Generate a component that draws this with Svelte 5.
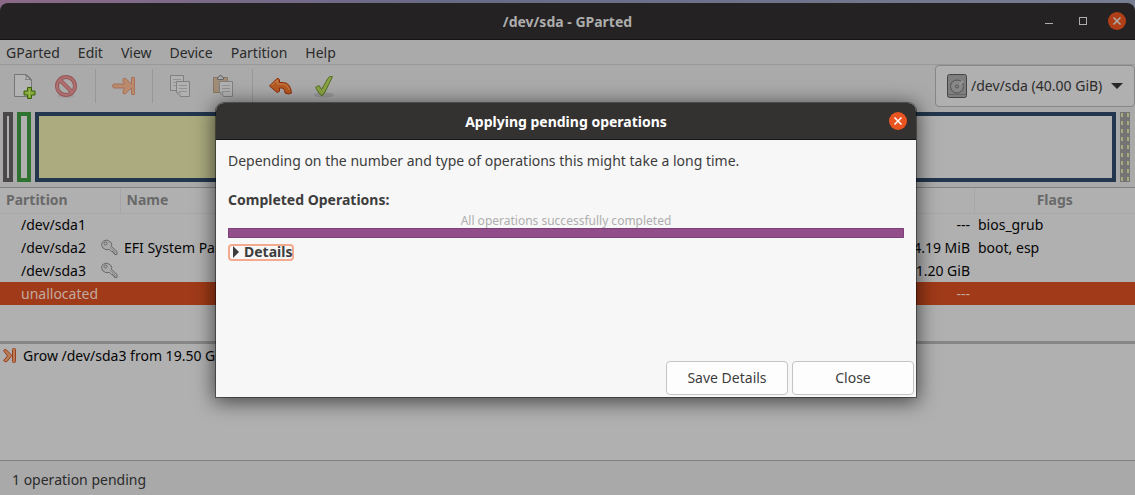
<script lang="ts">
interface PartitionRow {
	name: string
	locked?: boolean
	label?: string
	unused?: string
	flags?: string
	selected?: boolean
}

const menus = ['GParted', 'Edit', 'View', 'Device', 'Partition', 'Help']

const partitions: PartitionRow[] = [
	{ name: '/dev/sda1', unused: '---', flags: 'bios_grub' },
	{
		name: '/dev/sda2',
		locked: true,
		label: 'EFI System Partition',
		unused: '504.19 MiB',
		flags: 'boot, esp',
	},
	{ name: '/dev/sda3', locked: true, unused: '11.20 GiB' },
	{ name: 'unallocated', unused: '---', selected: true },
]

let device = $state('/dev/sda')
</script>

{#snippet cross()}
	<svg width="18" height="18" viewBox="0 0 18 18" aria-hidden="true">
		<path d="M5.5 5.5l7 7m0-7l-7 7" stroke="currentColor" stroke-width="1.5" />
	</svg>
{/snippet}

<div class="window">
	<header class="titlebar">
		<h1>/dev/sda - GParted</h1>
		<div class="controls">
			<button aria-label="Minimize">
				<svg width="18" height="18" aria-hidden="true"><path d="M5 11.5h8" stroke="currentColor" /></svg>
			</button>
			<button aria-label="Maximize">
				<svg width="18" height="18" aria-hidden="true">
					<rect x="5.5" y="5.5" width="7" height="7" fill="none" stroke="currentColor" />
				</svg>
			</button>
			<button class="close" aria-label="Close window">{@render cross()}</button>
		</div>
	</header>

	<nav>
		{#each menus as menu (menu)}
			<button>{menu}</button>
		{/each}
	</nav>

	<div class="toolbar">
		<button aria-label="New">
			<svg width="24" height="24" viewBox="0 0 24 24" aria-hidden="true">
				<path d="M2.5 .5h12l5 5v17h-17z" fill="#b3b3b3" stroke="#757575" />
				<path d="M13.500 .5q2 3 0 5 4-1 6 1z" fill="#c0c0c0" stroke="#777" />
				<path
					d="M15.500 13.500h4v3.500h3.500v4h-3.500v3.500h-4v-3.500h-3.500v-4h3.500z"
					fill="#7da130"
					stroke="#39620a"
				/>
				<path d="M17.500 15v8m-4-4h8" stroke="#9bb852" />
			</svg>
		</button>
		<button aria-label="Delete">
			<svg width="24" height="24" viewBox="0 0 24 24" aria-hidden="true">
				<ellipse cx="11" cy="22" rx="9" ry="2" fill="#a0a0a0" />
				<circle cx="11" cy="12" r="9" fill="none" stroke="#985557" stroke-width="4" />
				<path d="M5 6l12 12" stroke="#a05c5d" stroke-width="4" />
				<circle cx="11" cy="12" r="9" fill="none" stroke="#ad7271" stroke-width="2" />
				<path d="M5 6l12 12" stroke="#ad7271" stroke-width="2" />
			</svg>
		</button>
		<hr />
		<button aria-label="Resize/Move">
			<svg width="24" height="24" viewBox="0 0 24 24" aria-hidden="true">
				<path
					d="M1.500 10h11l-1.500-2.500q-1-3 2-3.500l6.500 6V3.500h3v17h-3V14L13 20q-3 0-2-3l1.500-3h-11q-2-2 0-4z"
					fill="#b98a6b"
					stroke="#a9705a"
				/>
			</svg>
		</button>
		<hr />
		<button aria-label="Copy">
			<svg width="24" height="24" viewBox="0 0 24 24" aria-hidden="true">
				<path d="M1.500 1.500h13v15h-13z" fill="#b1b1b1" stroke="#808080" />
				<path d="M4 5.500h8m-8 3h8m-8 3h8" stroke="#929292" />
				<path d="M7.500 7.500h13v15h-9l-4-4z" fill="#b1b1b1" stroke="#808080" />
				<path d="M10 11.500h8m-8 3h8m-8 3h8M8 18.500h3v4" stroke="#929292" fill="none" />
			</svg>
		</button>
		<button aria-label="Paste">
			<svg width="24" height="24" viewBox="0 0 24 24" aria-hidden="true">
				<path d="M1.500 3.500h14v15h-14z" fill="#a08d78" stroke="#887760" />
				<path d="M5.500 5.500v-2q2 0 2-2h2q0 2 2 2v2z" fill="#aaa" stroke="#666" />
				<path d="M7.500 7.500h13v15h-9l-4-4z" fill="#b1b1b1" stroke="#808080" />
				<path d="M10 11.500h8m-8 3h8m-8 3h8M8 18.500h3v4" stroke="#929292" fill="none" />
			</svg>
		</button>
		<hr />
		<button aria-label="Undo">
			<svg width="24" height="24" viewBox="0 0 24 24" aria-hidden="true">
				<path
					d="M.5 12L8 4.500q2-.5 2.500 1.500v2.500h4q7 .5 8 10.500-3 2-6.500 0 0-5-4-5h-1.500v3q-1 2-3 1z"
					fill="#b65a22"
					stroke="#8c2d0b"
				/>
				<path d="M2.500 11.500l6-5.500v4h6q4 .5 6 6" fill="none" stroke="#c4824f" />
			</svg>
		</button>
		<button aria-label="Apply">
			<svg width="24" height="24" viewBox="0 0 24 24" aria-hidden="true">
				<ellipse cx="12" cy="21" rx="10" ry="2.500" fill="#979797" />
				<path
					d="M3.500 13.500l3.500-2 2.500 4L16.500 3.500q2-1.500 4-1L13 18l-3 4q-3-2-6.500-8.500z"
					fill="#8ba344"
					stroke="#507020"
				/>
			</svg>
		</button>

		<label class="device">
			<svg width="20" height="24" viewBox="0 0 20 24" aria-hidden="true">
				<rect x=".5" y=".5" width="19" height="23" rx="2" fill="#7e7e7e" stroke="#444" />
				<path d="M1 20.500h18" stroke="#666" />
				<circle cx="10" cy="12.500" r="6.500" fill="#888" stroke="#555" />
				<circle cx="10" cy="12.500" r="1.500" fill="none" stroke="#555" />
				<path d="M13 10l3-3" stroke="#999" stroke-width="2" />
			</svg>
			<select bind:value={device} aria-label="Device">
				<option value="/dev/sda">/dev/sda (40.00 GiB)</option>
			</select>
			<svg class="arrow" width="12" height="6" aria-hidden="true"><path d="M0 0h12l-6 6z" fill="#282828" /></svg>
		</label>
	</div>

	<div class="disk">
		<div class="part grub"></div>
		<div class="part efi"></div>
		<div class="part root"></div>
		<div class="part free"></div>
	</div>

	<div class="partitions">
		<table>
			<colgroup>
				<col class="c-part" />
				<col />
				<col class="c-unused" />
				<col class="c-flags" />
			</colgroup>
			<thead>
				<tr>
					<th>Partition</th>
					<th>Name</th>
					<th></th>
					<th class="center">Flags</th>
				</tr>
			</thead>
			<tbody>
				{#each partitions as row (row.name)}
					<tr class:selected={row.selected}>
						<td>
							<div class="name">
								{row.name}
								{#if row.locked}
									<svg width="17" height="17" viewBox="0 0 17 17" aria-hidden="true">
										<path
											d="M8.500 10.500q-4 1-6.500-1.500-3-4 .5-7Q6-.5 9.500 3q2 2 1 4.500l5.500 5v3h-2.500v-1.500h-1.500v-1.500h-1.500z"
											fill="#aaa"
											stroke="#686868"
										/>
										<circle cx="4.500" cy="4.500" r="1.500" fill="#b0b0b0" stroke="#686868" />
										<path d="M9 8l5.500 5.500" stroke="#888" />
									</svg>
								{/if}
							</div>
						</td>
						<td>{row.label ?? ''}</td>
						<td class="right">{row.unused ?? ''}</td>
						<td>{row.flags ?? ''}</td>
					</tr>
				{/each}
			</tbody>
		</table>
	</div>

	<div class="operations">
		<svg width="14" height="18" viewBox="0 -2 14 18" aria-hidden="true">
			<path
				d="M.5 2.500Q2 .5 3.500 2L9 7.500 4 13.500q-2 1-3.500-1l4-4.500z"
				fill="#b77c56"
				stroke="#984020"
			/>
			<rect x="9.500" y=".5" width="3" height="14" rx="1" fill="#b77c56" stroke="#984020" />
		</svg>
		<span>Grow /dev/sda3 from 19.50 GiB</span>
	</div>

	<footer>1 operation pending</footer>
</div>

<div class="overlay">
	<div class="dialog" role="dialog" aria-labelledby="dialog-title">
		<header class="titlebar">
			<h2 id="dialog-title">Applying pending operations</h2>
			<div class="controls">
				<button class="close" aria-label="Close dialog">{@render cross()}</button>
			</div>
		</header>
		<div class="content">
			<p>Depending on the number and type of operations this might take a long time.</p>
			<h3>Completed Operations:</h3>
			<label class="status" for="progress">All operations successfully completed</label>
			<progress id="progress" value="1" max="1"></progress>
			<details>
				<summary>
					<svg width="6" height="12" aria-hidden="true"><path d="M0 0v12l6-6z" fill="#3d3d3d" /></svg>
					Details
				</summary>
			</details>
		</div>
		<div class="actions">
			<button>Save Details</button>
			<button>Close</button>
		</div>
	</div>
</div>

<style>
:global(body) {
	background: linear-gradient(90deg, #8b6a88, #676b88 40%, #787e91);
	font: 14px/20px 'Noto Sans', 'Open Sans', sans-serif;
	color: #2b2b2b;
}

button,
select {
	font: inherit;
	color: inherit;
	background: none;
	border: 0;
	padding: 0;
}

svg {
	display: block;
	flex: none;
	overflow: visible;
}

h1,
h2,
h3,
p {
	margin: 0;
	font-size: inherit;
}

.window {
	display: flex;
	flex-direction: column;
	box-sizing: border-box;
	min-height: 100vh;
	padding-top: 3px;
}

.titlebar {
	display: grid;
	grid-template-columns: 1fr auto 1fr;
	align-items: center;
	box-sizing: border-box;
	height: 37px;
	padding-inline: 9px;
	background: #242222;
	border-bottom: 1px solid #171616;
	border-radius: 8px 8px 0 0;
	color: #adadad;
}

.titlebar h1,
.titlebar h2 {
	grid-column: 2;
	padding-top: 2px;
}

.controls {
	display: flex;
	justify-content: flex-end;
	gap: 16px;
}

.close {
	background: #b03e17;
	border-radius: 50%;
}

nav {
	display: flex;
	gap: 18px;
	box-sizing: border-box;
	height: 25px;
	padding: 2px 6px 0;
	align-items: center;
	background: #aaa;
	border-bottom: 1px solid #999;
}

.toolbar {
	display: flex;
	align-items: center;
	box-sizing: border-box;
	height: 43px;
	background: #aaa;
	padding: 0 0 1px 12px;
}

.toolbar button {
	margin-right: 19px;
}

.toolbar hr {
	width: 1px;
	height: 34px;
	margin: 0 16px 0 -3px;
	border: 0;
	background: #979797;
}

.device {
	display: flex;
	align-items: center;
	gap: 4px;
	align-self: flex-start;
	box-sizing: border-box;
	height: 42px;
	margin-left: auto;
	padding: 0 11px;
	background: #b0b0b0;
	border: 1px solid #868686;
	border-radius: 4px;
}

.device select {
	appearance: none;
}

.arrow {
	margin-left: 4px;
}

.disk {
	display: flex;
	gap: 4px;
	height: 70px;
	padding: 4px 5px 5px 3px;
	background: #aaa;
}

.part {
	box-sizing: border-box;
	border: 4px solid;
	background: #b0b0b0;
}

.grub {
	width: 10px;
	border-color: #4a4848;
}

.efi {
	width: 14px;
	border-color: #307231;
}

.root {
	flex: 1;
	border-color: #22364d;
	background: linear-gradient(90deg, #abab7f 50%, #b0b0b0 50%);
}

.free {
	width: 10px;
	border: 1px solid #747474;
	background:
		linear-gradient(#747474, #747474) center / 4px 100% no-repeat,
		repeating-linear-gradient(#aaaa7e 0 4px, #747474 4px 8px);
}

.partitions {
	flex: none;
	height: 153px;
	background: #b0b0b0;
	border-top: 1px solid #828282;
}

table {
	width: 100%;
	table-layout: fixed;
	border-collapse: collapse;
	color: #050505;
}

.c-part {
	width: 120px;
}

.c-unused {
	width: 160px;
}

.c-flags {
	width: 161px;
}

th,
td {
	box-sizing: border-box;
	height: 23px;
	padding: 0 4px;
	text-align: left;
	white-space: nowrap;
}

th {
	height: 25px;
	padding-inline: 6px;
	color: #696969;
	border-bottom: 1px solid #a8a8a8;
}

th + th {
	border-left: 1px solid #a6a6a6;
}

td:first-child {
	padding: 0 2px 0 21px;
}

.center {
	text-align: center;
}

.right {
	text-align: right;
}

.selected {
	background: #a03a18;
	color: #c3aaa1;
}

.name {
	display: flex;
	align-items: center;
	justify-content: space-between;
}

.operations {
	flex: 1;
	display: flex;
	align-items: flex-start;
	gap: 6px;
	padding: 2px 3px;
	background: #b0b0b0;
	border-top: 3px solid #868686;
	color: #050505;
}

footer {
	padding: 9px 12px 5px;
	background: #a9a9a9;
	border-top: 1px solid #828282;
}

.overlay {
	position: absolute;
	inset: 0;
	display: flex;
	align-items: flex-start;
	justify-content: center;
	padding: 103px 3px 0 0;
}

.dialog {
	display: flex;
	flex-direction: column;
	width: 100%;
	max-width: 700px;
	background: #f7f7f7;
	border-radius: 8px 8px 0 0;
	box-shadow:
		0 0 0 1px #0006,
		0 3px 20px 2px #0009;
	color: #3d3d3d;
}

.dialog .titlebar {
	background: #343131;
	color: #fff;
}

.dialog .close {
	background: #e95420;
}

.content {
	display: flex;
	flex-direction: column;
	padding: 11px 12px 0;
}

h3 {
	margin-top: 19px;
}

.status {
	margin-top: 3px;
	font-size: 12px;
	line-height: 15px;
	text-align: center;
	color: #aeaeae;
}

progress {
	appearance: none;
	display: block;
	width: 100%;
	height: 10px;
	border: 0;
}

progress::-webkit-progress-value {
	background: #924d8b;
	border: 1px solid #7c4177;
	border-radius: 1px;
	box-sizing: border-box;
}

details {
	margin-top: 5px;
}

summary {
	display: inline-flex;
	align-items: center;
	gap: 5px;
	box-sizing: border-box;
	height: 17px;
	padding: 0 0 0 3px;
	border: 2px solid #f4aa8f;
	border-radius: 4px;
	font-weight: bold;
}

.actions {
	display: flex;
	justify-content: flex-end;
	gap: 4px;
	padding: 98px 2px 2px;
}

.actions button {
	box-sizing: border-box;
	width: 122px;
	height: 34px;
	background: #fdfdfd;
	border: 1px solid #c4c4c4;
	border-radius: 4px;
}
</style>
